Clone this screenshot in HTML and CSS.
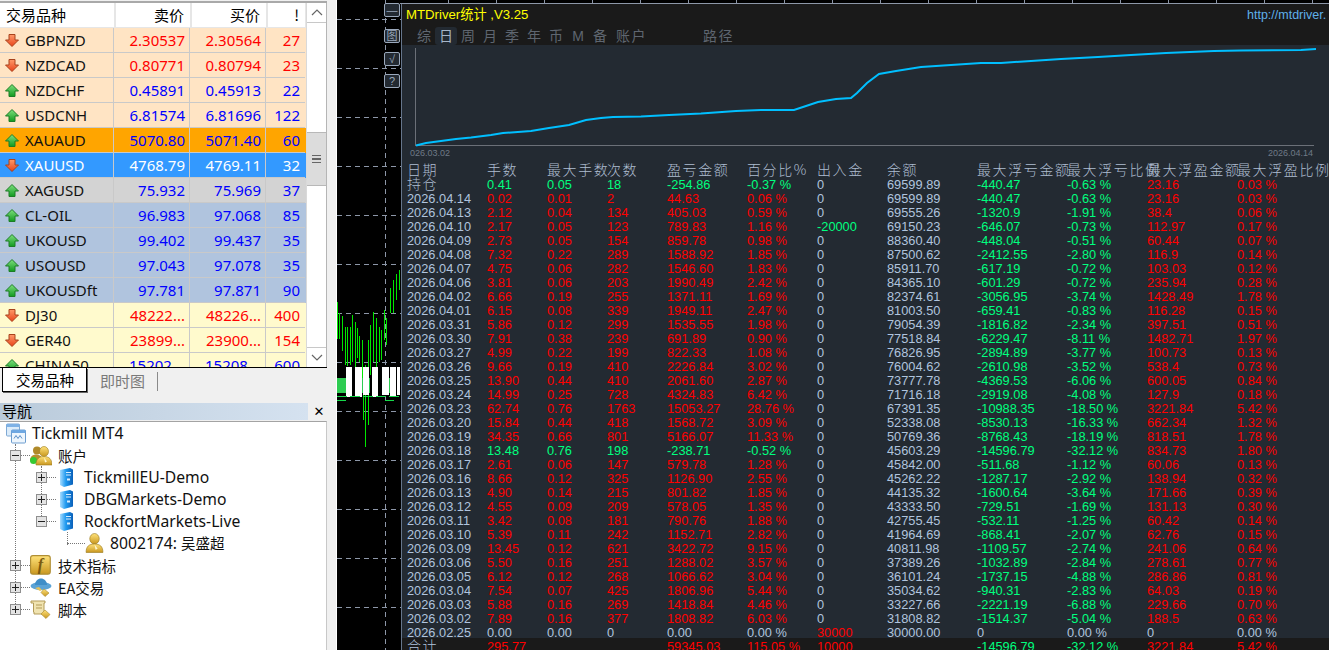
FILE: index.html
```html
<!DOCTYPE html>
<html lang="zh">
<head>
<meta charset="utf-8">
<title>MetaTrader 4</title>
<link rel="stylesheet" href="styles.css">
</head>
<body>
<svg class="defs" width="0" height="0">
  <defs>
    <linearGradient id="gu" x1="0" y1="0" x2="0" y2="1"><stop offset="0" stop-color="#7fe07f"/><stop offset="1" stop-color="#119a1f"/></linearGradient>
    <linearGradient id="gd" x1="0" y1="0" x2="0" y2="1"><stop offset="0" stop-color="#ff9a6a"/><stop offset="1" stop-color="#e8431a"/></linearGradient>
    <linearGradient id="gs" x1="0" y1="0" x2="1" y2="0"><stop offset="0" stop-color="#a8dcff"/><stop offset=".45" stop-color="#1f9af0"/><stop offset="1" stop-color="#0a5fb8"/></linearGradient>
    <linearGradient id="gg" x1="0" y1="0" x2="0" y2="1"><stop offset="0" stop-color="#ffe27a"/><stop offset="1" stop-color="#c9971f"/></linearGradient>
    <symbol id="up" viewBox="0 0 14 13"><path d="M7 .5 13.5 7H10v5.5H4V7H.5z" fill="url(#gu)" stroke="#1c7d26"/></symbol>
    <symbol id="down" viewBox="0 0 14 13"><path d="M7 12.5 .5 6H4V.5h6V6h3.500z" fill="url(#gd)" stroke="#a8421c"/></symbol>
    <symbol id="term" viewBox="0 0 20 20">
      <rect x=".5" y=".5" width="13" height="12" rx="1" fill="#dcecfa" stroke="#7fa9d4"/><rect x=".5" y=".5" width="13" height="3" fill="#7fb2e6"/>
      <rect x="5.500" y="6.500" width="14" height="13" rx="1" fill="#eef6fd" stroke="#6d9dcf"/><rect x="5.500" y="6.500" width="14" height="3" fill="#6fa8e2"/>
      <path d="M8 15l2-3 2 3 2-3 2 3" fill="none" stroke="#5a8fc8"/>
    </symbol>
    <symbol id="user" viewBox="0 0 18 19">
      <ellipse cx="9" cy="5.500" rx="4.500" ry="5" fill="url(#gg)" stroke="#9a7a20" stroke-width=".6"/>
      <path d="M1 18.500c0-6 3-8 8-8s8 2 8 8z" fill="url(#gg)" stroke="#9a7a20" stroke-width=".6"/>
      <path d="M9 11l3 4-2 1z" fill="#fff6cf"/>
    </symbol>
    <symbol id="users" viewBox="0 0 22 20">
      <circle cx="7" cy="5" r="4" fill="#b08a2a"/><path d="M0 15c0-4 3-6 6-6s4 1 5 2v6H2z" fill="#b78f2e"/>
      <circle cx="3.500" cy="15" r="3.500" fill="#35c932"/>
      <ellipse cx="14" cy="6" rx="4.500" ry="5" fill="url(#gg)" stroke="#9a7a20" stroke-width=".6"/>
      <path d="M6 19.500c0-6 3-8.500 8-8.500s8 2.500 8 8.500z" fill="url(#gg)" stroke="#9a7a20" stroke-width=".6"/>
      <path d="M14 12l3 4-2 1z" fill="#fff6cf"/>
    </symbol>
    <symbol id="server" viewBox="0 0 15 20">
      <path d="M1 2.500 11 .5l3 1.500v15l-9 2.500-4-2z" fill="url(#gs)"/>
      <path d="M7 5h5M7 7.500h5" stroke="#d7eeff" fill="none"/><rect x="8" y="11" width="3" height="2" fill="#d7eeff"/>
    </symbol>
    <symbol id="func" viewBox="0 0 19 18">
      <rect x=".5" y=".5" width="17" height="16" rx="2" fill="url(#gg)" stroke="#b08f35"/>
      <text x="9" y="13" text-anchor="middle" class="fglyph">f</text>
    </symbol>
    <symbol id="hat" viewBox="0 0 22 19">
      <ellipse cx="11" cy="8" rx="10.500" ry="4" fill="#5ba3d6"/><path d="M5 7c0-4 3-6.500 6-6.500s6 2.500 6 6.500z" fill="#3f8ec8"/>
      <path d="M5 10l5 3 2-1-3-3z" fill="#e5c25d"/><path d="M14 11l5 4-4 3.500-4-4z" fill="url(#gg)" stroke="#a8892f" stroke-width=".6"/>
    </symbol>
    <symbol id="scroll" viewBox="0 0 22 19">
      <path d="M1 1h14v2h-1v9h1v2H4v-2h-.5V3H1z" fill="#f0e3b0" stroke="#b39b58"/>
      <path d="M6 5h6M6 8h6" stroke="#b39b58"/>
      <path d="M15 10l5 4.500-4 4-5-4.500z" fill="url(#gg)" stroke="#a8892f" stroke-width=".6"/>
    </symbol>
  </defs>
</svg>

<div class="app">
  <aside class="side">
    <section class="market">
      <div class="mw-table">
        <div class="mw-head">
          <div class="hc hc-name">交易品种</div>
          <div class="hc hc-num">卖价</div>
          <div class="hc hc-num">买价</div>
          <div class="hc hc-num">!</div>
        </div>
        <div class="mw-row peach dn"><div class="c-name"><svg class="arr"><use href="#down"/></svg>GBPNZD</div><div class="c-n">2.30537</div><div class="c-n">2.30564</div><div class="c-n c-s">27</div></div>
        <div class="mw-row peach dn"><div class="c-name"><svg class="arr"><use href="#down"/></svg>NZDCAD</div><div class="c-n">0.80771</div><div class="c-n">0.80794</div><div class="c-n c-s">23</div></div>
        <div class="mw-row peach up"><div class="c-name"><svg class="arr"><use href="#up"/></svg>NZDCHF</div><div class="c-n">0.45891</div><div class="c-n">0.45913</div><div class="c-n c-s">22</div></div>
        <div class="mw-row peach up"><div class="c-name"><svg class="arr"><use href="#up"/></svg>USDCNH</div><div class="c-n">6.81574</div><div class="c-n">6.81696</div><div class="c-n c-s">122</div></div>
        <div class="mw-row orange up"><div class="c-name"><svg class="arr"><use href="#up"/></svg>XAUAUD</div><div class="c-n">5070.80</div><div class="c-n">5071.40</div><div class="c-n c-s">60</div></div>
        <div class="mw-row sel"><div class="c-name"><svg class="arr"><use href="#down"/></svg>XAUUSD</div><div class="c-n">4768.79</div><div class="c-n">4769.11</div><div class="c-n c-s">32</div></div>
        <div class="mw-row grey up"><div class="c-name"><svg class="arr"><use href="#up"/></svg>XAGUSD</div><div class="c-n">75.932</div><div class="c-n">75.969</div><div class="c-n c-s">37</div></div>
        <div class="mw-row steel up"><div class="c-name"><svg class="arr"><use href="#up"/></svg>CL-OIL</div><div class="c-n">96.983</div><div class="c-n">97.068</div><div class="c-n c-s">85</div></div>
        <div class="mw-row steel up"><div class="c-name"><svg class="arr"><use href="#up"/></svg>UKOUSD</div><div class="c-n">99.402</div><div class="c-n">99.437</div><div class="c-n c-s">35</div></div>
        <div class="mw-row steel up"><div class="c-name"><svg class="arr"><use href="#up"/></svg>USOUSD</div><div class="c-n">97.043</div><div class="c-n">97.078</div><div class="c-n c-s">35</div></div>
        <div class="mw-row steel up"><div class="c-name"><svg class="arr"><use href="#up"/></svg>UKOUSDft</div><div class="c-n">97.781</div><div class="c-n">97.871</div><div class="c-n c-s">90</div></div>
        <div class="mw-row lemon dn"><div class="c-name"><svg class="arr"><use href="#down"/></svg>DJ30</div><div class="c-n">48222...</div><div class="c-n">48226...</div><div class="c-n c-s">400</div></div>
        <div class="mw-row lemon dn"><div class="c-name"><svg class="arr"><use href="#down"/></svg>GER40</div><div class="c-n">23899...</div><div class="c-n">23900...</div><div class="c-n c-s">154</div></div>
        <div class="mw-row lemon up"><div class="c-name"><svg class="arr"><use href="#up"/></svg>CHINA50</div><div class="c-n c-l">15202</div><div class="c-n c-l">15208</div><div class="c-n c-s">600</div></div>
      </div>
      <div class="vscroll">
        <div class="sb-btn"><svg width="12" height="7" viewBox="0 0 12 7"><path d="M1 6l5-5 5 5" fill="none" stroke="#666" stroke-width="1.200"/></svg></div>
        <div class="sb-track"><div class="sb-thumb"><i></i><i></i><i></i></div></div>
        <div class="sb-btn sb-btn-b"><svg width="12" height="7" viewBox="0 0 12 7"><path d="M1 1l5 5 5-5" fill="none" stroke="#666" stroke-width="1.200"/></svg></div>
      </div>
    </section>

    <div class="tabs">
      <div class="tab on">交易品种</div>
      <div class="tab">即时图</div>
    </div>

    <section class="nav">
      <header class="nav-head"><span class="nav-title">导航</span><span class="nav-x">✕</span></header>
      <div class="tree">
        <span class="vl vl1"></span><span class="vl vl2"></span><span class="vl vl3"></span>
        <div class="node l0"><svg class="ti"><use href="#term"/></svg><span>Tickmill MT4</span></div>
        <div class="node l1"><span class="exp"></span><span class="dots"></span><svg class="ti"><use href="#users"/></svg><span class="cn">账户</span></div>
        <div class="node l2"><span class="exp plus"></span><span class="dots"></span><svg class="ti ti-s"><use href="#server"/></svg><span>TickmillEU-Demo</span></div>
        <div class="node l2"><span class="exp plus"></span><span class="dots"></span><svg class="ti ti-s"><use href="#server"/></svg><span>DBGMarkets-Demo</span></div>
        <div class="node l2"><span class="exp"></span><span class="dots"></span><svg class="ti ti-s"><use href="#server"/></svg><span>RockfortMarkets-Live</span></div>
        <div class="node l3"><span class="dots dots-l"></span><svg class="ti ti-u"><use href="#user"/></svg><span>8002174: <span class="cn">吴盛超</span></span></div>
        <div class="node l1"><span class="exp plus"></span><span class="dots"></span><svg class="ti"><use href="#func"/></svg><span class="cn">技术指标</span></div>
        <div class="node l1"><span class="exp plus"></span><span class="dots"></span><svg class="ti"><use href="#hat"/></svg><span class="cn">EA交易</span></div>
        <div class="node l1"><span class="exp plus"></span><span class="dots"></span><svg class="ti"><use href="#scroll"/></svg><span class="cn">脚本</span></div>
      </div>
    </section>
  </aside>

  <main class="chart">
    <svg class="chart-bg" width="992" height="650" viewBox="337 0 992 650" shape-rendering="crispEdges">
      <path d="M337 19.500H401M337 68.500H401M337 117.500H401M337 166.500H401M337 215.500H401M337 264.500H401M337 313.500H401M337 362.500H401M337 411.500H401M337 460.500H401M337 509.500H401M337 558.500H401M337 607.500H401M385.500 0V650" stroke="#8d97a8" stroke-dasharray="5 4" fill="none"/>
      <path d="M400 3.500H1329M448.500 0V3M496.500 0V3M544.500 0V3M592.500 0V3M640.500 0V3M688.500 0V3M736.500 0V3M784.500 0V3M832.500 0V3M880.500 0V3M928.500 0V3M976.500 0V3M1024.500 0V3M1072.500 0V3M1120.500 0V3M1168.500 0V3M1216.500 0V3M1264.500 0V3M1312.500 0V3" stroke="#8d97a8" fill="none"/>
      <path d="M337.500 302V339M339.500 313V339M342.500 316V351M345.500 327V365M347.500 327V366M350.500 327V365M352.500 315V362M355.500 322V375M357.500 328V358M359.500 336V362M362.500 340V380M365.500 365V447M363.500 390V420M368.500 340V425M370.500 325V375M373.500 312V362M376.500 318V375M379.500 327V362M381.500 330V360M384.500 310V340M386.500 318V345M390.500 288V313M393.500 280V313M396.500 274V300M399.500 270V290" stroke="#00e600" fill="none"/>
      <path d="M337 378H346V393H337ZM360 378H370V393H360ZM385 378H394V393H385Z" fill="#2ecc52"/>
      <path d="M346 367h6v30h-6zM355 367h7v30h-7zM363 367h6v28h-6zM372 367h6v30h-6zM382 367h7v28h-7zM390 367h6v30h-6zM397 367h3v28h-3z" fill="#fff"/>
      <path d="M337 396H400" stroke="#16d94a" stroke-dasharray="10 3" fill="none"/>
      <path d="M337 400H346M385 400H394" stroke="#16d94a" fill="none"/>
    </svg>

    <button class="cbtn cb1">—</button>
    <button class="cbtn cb2">图</button>
    <button class="cbtn cb3">√</button>
    <button class="cbtn cb4">?</button>

    <div class="stats">
      <div class="st-top">
        <div class="st-title">
          <span class="st-name">MTDriver统计 ,V3.25</span>
          <span class="st-url">http://mtdriver.</span>
        </div>
        <div class="st-tabs">
          <span>综</span><span class="active">日</span><span>周</span><span>月</span><span>季</span><span>年</span><span>币</span><span>M</span><span>备</span><span class="wide">账户</span><span class="wide far">路径</span>
        </div>
      </div>
      <div class="spark">
        <svg class="spark-svg" width="928" height="102" viewBox="401 45 928 102">
          <path d="M414.500 48V145.500H1313" fill="none" stroke="#6b7078" shape-rendering="crispEdges"/>
          <polyline points="415,145.500 425,143 440,141 455,139 470,137.500 490,135 502,133 530,131 548,128 568,125 585,120 600,118 612,117 640,116.500 668,115 700,113.500 735,111 760,110 793,110 805,106 817,102 835,99 850,98 856,93 866,83 878,74 895,71 920,67 950,65 980,63 1000,63 1030,61 1060,59 1097,57 1130,55 1165,53 1213,51 1240,50.500 1300,50 1315,49" fill="none" stroke="#00bfff" stroke-width="2"/>
        </svg>
        <div class="spark-axis"><span>026.03.02</span><span>2026.04.14</span></div>
      </div>
      <div class="grid">
        <div class="row head"><span>日期</span><span>手数</span><span>最大手数</span><span>次数</span><span>盈亏金额</span><span>百分比%</span><span>出入金</span><span>余额</span><span>最大浮亏金额</span><span>最大浮亏比例</span><span>最大浮盈金额</span><span>最大浮盈比例</span></div>
        <div class="row gr"><span class="cjk">持仓</span><span>0.41</span><span>0.05</span><span>18</span><span>-254.86</span><span>-0.37 %</span><span class="n">0</span><span class="n">69599.89</span><span class="g">-440.47</span><span class="g">-0.63 %</span><span class="r">23.16</span><span class="r">0.03 %</span></div>
        <div class="row rd"><span class="n">2026.04.14</span><span>0.02</span><span>0.01</span><span>2</span><span>44.63</span><span>0.06 %</span><span class="n">0</span><span class="n">69599.89</span><span class="g">-440.47</span><span class="g">-0.63 %</span><span>23.16</span><span>0.03 %</span></div>
        <div class="row rd"><span class="n">2026.04.13</span><span>2.12</span><span>0.04</span><span>134</span><span>405.03</span><span>0.59 %</span><span class="n">0</span><span class="n">69555.26</span><span class="g">-1320.9</span><span class="g">-1.91 %</span><span>38.4</span><span>0.06 %</span></div>
        <div class="row rd"><span class="n">2026.04.10</span><span>2.17</span><span>0.05</span><span>123</span><span>789.83</span><span>1.16 %</span><span class="g">-20000</span><span class="n">69150.23</span><span class="g">-646.07</span><span class="g">-0.73 %</span><span>112.97</span><span>0.17 %</span></div>
        <div class="row rd"><span class="n">2026.04.09</span><span>2.73</span><span>0.05</span><span>154</span><span>859.78</span><span>0.98 %</span><span class="n">0</span><span class="n">88360.40</span><span class="g">-448.04</span><span class="g">-0.51 %</span><span>60.44</span><span>0.07 %</span></div>
        <div class="row rd"><span class="n">2026.04.08</span><span>7.32</span><span>0.22</span><span>289</span><span>1588.92</span><span>1.85 %</span><span class="n">0</span><span class="n">87500.62</span><span class="g">-2412.55</span><span class="g">-2.80 %</span><span>116.9</span><span>0.14 %</span></div>
        <div class="row rd"><span class="n">2026.04.07</span><span>4.75</span><span>0.06</span><span>282</span><span>1546.60</span><span>1.83 %</span><span class="n">0</span><span class="n">85911.70</span><span class="g">-617.19</span><span class="g">-0.72 %</span><span>103.03</span><span>0.12 %</span></div>
        <div class="row rd"><span class="n">2026.04.06</span><span>3.81</span><span>0.06</span><span>203</span><span>1990.49</span><span>2.42 %</span><span class="n">0</span><span class="n">84365.10</span><span class="g">-601.29</span><span class="g">-0.72 %</span><span>235.94</span><span>0.28 %</span></div>
        <div class="row rd"><span class="n">2026.04.02</span><span>6.66</span><span>0.19</span><span>255</span><span>1371.11</span><span>1.69 %</span><span class="n">0</span><span class="n">82374.61</span><span class="g">-3056.95</span><span class="g">-3.74 %</span><span>1428.49</span><span>1.78 %</span></div>
        <div class="row rd"><span class="n">2026.04.01</span><span>6.15</span><span>0.08</span><span>339</span><span>1949.11</span><span>2.47 %</span><span class="n">0</span><span class="n">81003.50</span><span class="g">-659.41</span><span class="g">-0.83 %</span><span>116.28</span><span>0.15 %</span></div>
        <div class="row rd"><span class="n">2026.03.31</span><span>5.86</span><span>0.12</span><span>299</span><span>1535.55</span><span>1.98 %</span><span class="n">0</span><span class="n">79054.39</span><span class="g">-1816.82</span><span class="g">-2.34 %</span><span>397.51</span><span>0.51 %</span></div>
        <div class="row rd"><span class="n">2026.03.30</span><span>7.91</span><span>0.38</span><span>239</span><span>691.89</span><span>0.90 %</span><span class="n">0</span><span class="n">77518.84</span><span class="g">-6229.47</span><span class="g">-8.11 %</span><span>1482.71</span><span>1.97 %</span></div>
        <div class="row rd"><span class="n">2026.03.27</span><span>4.99</span><span>0.22</span><span>199</span><span>822.33</span><span>1.08 %</span><span class="n">0</span><span class="n">76826.95</span><span class="g">-2894.89</span><span class="g">-3.77 %</span><span>100.73</span><span>0.13 %</span></div>
        <div class="row rd"><span class="n">2026.03.26</span><span>9.66</span><span>0.19</span><span>410</span><span>2226.84</span><span>3.02 %</span><span class="n">0</span><span class="n">76004.62</span><span class="g">-2610.98</span><span class="g">-3.52 %</span><span>538.4</span><span>0.73 %</span></div>
        <div class="row rd"><span class="n">2026.03.25</span><span>13.90</span><span>0.44</span><span>410</span><span>2061.60</span><span>2.87 %</span><span class="n">0</span><span class="n">73777.78</span><span class="g">-4369.53</span><span class="g">-6.06 %</span><span>600.05</span><span>0.84 %</span></div>
        <div class="row rd"><span class="n">2026.03.24</span><span>14.99</span><span>0.25</span><span>728</span><span>4324.83</span><span>6.42 %</span><span class="n">0</span><span class="n">71716.18</span><span class="g">-2919.08</span><span class="g">-4.08 %</span><span>127.9</span><span>0.18 %</span></div>
        <div class="row rd"><span class="n">2026.03.23</span><span>62.74</span><span>0.76</span><span>1763</span><span>15053.27</span><span>28.76 %</span><span class="n">0</span><span class="n">67391.35</span><span class="g">-10988.35</span><span class="g">-18.50 %</span><span>3221.84</span><span>5.42 %</span></div>
        <div class="row rd"><span class="n">2026.03.20</span><span>15.84</span><span>0.44</span><span>418</span><span>1568.72</span><span>3.09 %</span><span class="n">0</span><span class="n">52338.08</span><span class="g">-8530.13</span><span class="g">-16.33 %</span><span>662.34</span><span>1.32 %</span></div>
        <div class="row rd"><span class="n">2026.03.19</span><span>34.35</span><span>0.66</span><span>801</span><span>5166.07</span><span>11.33 %</span><span class="n">0</span><span class="n">50769.36</span><span class="g">-8768.43</span><span class="g">-18.19 %</span><span>818.51</span><span>1.78 %</span></div>
        <div class="row gr"><span class="n">2026.03.18</span><span>13.48</span><span>0.76</span><span>198</span><span>-238.71</span><span>-0.52 %</span><span class="n">0</span><span class="n">45603.29</span><span>-14596.79</span><span>-32.12 %</span><span class="r">834.73</span><span class="r">1.80 %</span></div>
        <div class="row rd"><span class="n">2026.03.17</span><span>2.61</span><span>0.06</span><span>147</span><span>579.78</span><span>1.28 %</span><span class="n">0</span><span class="n">45842.00</span><span class="g">-511.68</span><span class="g">-1.12 %</span><span>60.06</span><span>0.13 %</span></div>
        <div class="row rd"><span class="n">2026.03.16</span><span>8.66</span><span>0.12</span><span>325</span><span>1126.90</span><span>2.55 %</span><span class="n">0</span><span class="n">45262.22</span><span class="g">-1287.17</span><span class="g">-2.92 %</span><span>138.94</span><span>0.32 %</span></div>
        <div class="row rd"><span class="n">2026.03.13</span><span>4.90</span><span>0.14</span><span>215</span><span>801.82</span><span>1.85 %</span><span class="n">0</span><span class="n">44135.32</span><span class="g">-1600.64</span><span class="g">-3.64 %</span><span>171.66</span><span>0.39 %</span></div>
        <div class="row rd"><span class="n">2026.03.12</span><span>4.55</span><span>0.09</span><span>209</span><span>578.05</span><span>1.35 %</span><span class="n">0</span><span class="n">43333.50</span><span class="g">-729.51</span><span class="g">-1.69 %</span><span>131.13</span><span>0.30 %</span></div>
        <div class="row rd"><span class="n">2026.03.11</span><span>3.42</span><span>0.08</span><span>181</span><span>790.76</span><span>1.88 %</span><span class="n">0</span><span class="n">42755.45</span><span class="g">-532.11</span><span class="g">-1.25 %</span><span>60.42</span><span>0.14 %</span></div>
        <div class="row rd"><span class="n">2026.03.10</span><span>5.39</span><span>0.11</span><span>242</span><span>1152.71</span><span>2.82 %</span><span class="n">0</span><span class="n">41964.69</span><span class="g">-868.41</span><span class="g">-2.07 %</span><span>62.76</span><span>0.15 %</span></div>
        <div class="row rd"><span class="n">2026.03.09</span><span>13.45</span><span>0.12</span><span>621</span><span>3422.72</span><span>9.15 %</span><span class="n">0</span><span class="n">40811.98</span><span class="g">-1109.57</span><span class="g">-2.74 %</span><span>241.06</span><span>0.64 %</span></div>
        <div class="row rd"><span class="n">2026.03.06</span><span>5.50</span><span>0.16</span><span>251</span><span>1288.02</span><span>3.57 %</span><span class="n">0</span><span class="n">37389.26</span><span class="g">-1032.89</span><span class="g">-2.84 %</span><span>278.61</span><span>0.77 %</span></div>
        <div class="row rd"><span class="n">2026.03.05</span><span>6.12</span><span>0.12</span><span>268</span><span>1066.62</span><span>3.04 %</span><span class="n">0</span><span class="n">36101.24</span><span class="g">-1737.15</span><span class="g">-4.88 %</span><span>286.86</span><span>0.81 %</span></div>
        <div class="row rd"><span class="n">2026.03.04</span><span>7.54</span><span>0.07</span><span>425</span><span>1806.96</span><span>5.44 %</span><span class="n">0</span><span class="n">35034.62</span><span class="g">-940.31</span><span class="g">-2.83 %</span><span>64.03</span><span>0.19 %</span></div>
        <div class="row rd"><span class="n">2026.03.03</span><span>5.88</span><span>0.16</span><span>269</span><span>1418.84</span><span>4.46 %</span><span class="n">0</span><span class="n">33227.66</span><span class="g">-2221.19</span><span class="g">-6.88 %</span><span>229.66</span><span>0.70 %</span></div>
        <div class="row rd"><span class="n">2026.03.02</span><span>7.89</span><span>0.16</span><span>377</span><span>1808.82</span><span>6.03 %</span><span class="n">0</span><span class="n">31808.82</span><span class="g">-1514.37</span><span class="g">-5.04 %</span><span>188.5</span><span>0.63 %</span></div>
        <div class="row nn"><span>2026.02.25</span><span>0.00</span><span>0.00</span><span>0</span><span>0.00</span><span>0.00 %</span><span class="r">30000</span><span>30000.00</span><span>0</span><span>0.00 %</span><span>0</span><span>0.00 %</span></div>
        <div class="row rd total"><span class="n cjk">合计</span><span>295.77</span><span></span><span></span><span>59345.03</span><span>115.05 %</span><span>10000</span><span></span><span class="g">-14596.79</span><span class="g">-32.12 %</span><span>3221.84</span><span>5.42 %</span></div>
      </div>
    </div>
  </main>
</div>
</body>
</html>
```

FILE: styles.css
```css
* { box-sizing: border-box; }
html, body { margin: 0; padding: 0; height: 650px; overflow: hidden; background: #000; }
.defs { position: absolute; }
.app { display: flex; width: 1329px; height: 650px; }

/* left column */
.side {
  width: 336px; flex: none; display: flex; flex-direction: column;
  background: #f0f0f0; font-family: "Noto Sans", "Noto Sans CJK SC", sans-serif;
  font-size: 15px; color: #000; overflow: hidden;
}
.market {
  display: flex; width: 327px; height: 367px; flex: none; margin-top: 1px;
  border-top: 2px solid #a9a9a9; border-bottom: 1px solid #000; background: #fff;
  overflow: hidden;
}
.mw-table { width: 306px; flex: none; overflow: hidden; }
.mw-head { display: grid; grid-template-columns: 114px 76px 76px 39px; height: 25px; background: #e6e6e6; }
.hc { background: #fff; height: 24px; line-height: 24px; margin-left: 2px; font-family: "Noto Sans CJK SC", sans-serif; font-size: 15px; }
.hc-name { margin-left: 0; padding-left: 6px; }
.hc-num { text-align: right; padding-right: 6px; }
.mw-row { display: grid; grid-template-columns: 114px 76px 76px 39px; height: 25px; line-height: 25px; }
.mw-row > div { border-right: 1px solid #c9c9c9; border-bottom: 1px solid #c9c9c9; white-space: nowrap; overflow: hidden; }
.mw-row > div:last-child { border-right: 0; }
.c-name { display: flex; align-items: center; padding-left: 5px; gap: 6px; color: #111; }
.c-n { text-align: right; padding-right: 4px; }
.c-s { padding-right: 5px; }
.c-l { text-align: left; padding-left: 15px; }
.arr { width: 14px; height: 13px; flex: none; }
.peach { background: #ffe4c4; }
.orange { background: #ffa500; }
.sel { background: #3399ff; color: #fff; }
.sel .c-name { color: #fff; }
.grey { background: #d3d3d3; }
.steel { background: #b0c4de; }
.lemon { background: #fffacd; }
.up .c-n { color: #0000ff; }
.dn .c-n { color: #ff0000; }

.vscroll { width: 21px; flex: none; display: flex; flex-direction: column; border-left: 1px solid #d9d9d9; border-right: 1px solid #b5b5b5; background: #fff; }
.sb-btn { height: 20px; flex: none; border-bottom: 1px solid #c8c8c8; display: flex; align-items: center; justify-content: center; }
.sb-btn-b { border-bottom: 0; border-top: 1px solid #c8c8c8; }
.sb-track { flex: 1; padding-top: 109px; }
.sb-thumb { height: 54px; background: #dcdcdc; border-top: 1px solid #b8b8b8; border-bottom: 1px solid #b8b8b8; display: flex; flex-direction: column; align-items: center; justify-content: center; gap: 2px; }
.sb-thumb i { display: block; width: 9px; height: 1.5px; background: #666; }

.tabs { height: 31px; flex: none; display: flex; align-items: flex-start; padding-left: 2px; font-family: "Noto Sans CJK SC", sans-serif; }
.tab { height: 24px; line-height: 24px; padding: 0 12px 0 12px; color: #7a7a7a; }
.tab.on { width: 85px; background: #fff; color: #000; padding: 0 0 0 13px; border: 1px solid #000; border-top: 0; box-shadow: 1px 1px 0 #666; line-height: 23px; font-size: 14.5px; }
.tab:not(.on) { border-right: 1px solid #8a8a8a; height: 19px; margin-top: 4px; line-height: 18px; padding: 0 12px 0 13px; font-size: 15px; }

.nav { flex: 1; display: flex; flex-direction: column; margin-top: 4px; }
.nav-head { height: 18px; flex: none; display: flex; width: 327px; }
.nav-title { width: 308px; flex: none; height: 17px; line-height: 16px; padding-left: 2px; background: linear-gradient(90deg, #b9cada, #d5e2f0); font-family: "Noto Sans CJK SC", sans-serif; font-size: 15px; }
.nav-x { flex: 1; text-align: center; padding-left: 3px; font-size: 13px; line-height: 17px; font-weight: bold; font-family: "DejaVu Sans", sans-serif; }
.tree { position: relative; flex: 1; width: 327px; background: #fff; border-top: 1px solid #a3a3a3; border-right: 1px solid #c8c8c8; font-size: 15.7px; }
.cn { font-size: 14.5px; font-family: "Noto Sans CJK SC", sans-serif; }
.node { height: 22px; display: flex; align-items: center; white-space: nowrap; color: #111; }
.l0 { padding-left: 6px; }
.l1 { padding-left: 10px; }
.l2 { padding-left: 36px; }
.l3 { padding-left: 67px; }
.exp { width: 11px; height: 11px; flex: none; position: relative; background: #e4e4e4; border: 1px solid #8f8f8f; z-index: 1; }
.exp::before { content: ""; position: absolute; left: 1px; right: 1px; top: 4px; height: 1px; background: #222; }
.exp.plus::after { content: ""; position: absolute; top: 1px; bottom: 1px; left: 4px; width: 1px; background: #222; }
.dots { width: 9px; flex: none; border-top: 1px dotted #777; }
.dots-l { width: 18px; }
.ti { width: 22px; height: 21px; flex: none; margin-right: 6px; }
.l0 .ti { width: 20px; }
.ti-s { width: 15px; height: 21px; margin-left: 3px; margin-right: 10px; }
.ti-u { width: 19px; height: 20px; margin-right: 6px; }
.fglyph { font-family: "Liberation Serif", serif; font-style: italic; font-weight: bold; font-size: 14px; fill: #7a5a10; }
.vl { position: absolute; border-left: 1px dotted #777; width: 0; }
.vl1 { left: 15px; top: 22px; height: 166px; }
.vl2 { left: 41px; top: 44px; height: 56px; }
.vl3 { left: 67px; top: 110px; height: 13px; }

/* chart */
.chart { position: relative; flex: 1; height: 650px; background: #000; border-left: 1px solid #fff; overflow: hidden; }
.chart-bg { position: absolute; left: 0; top: 0; }
.cbtn {
  position: absolute; left: 47px; width: 16px; height: 14px; padding: 0; background: #232a32;
  border: 1px solid #9aa8bb; border-radius: 2px; color: #9aa8bb; text-align: center;
  font: 11px/12px "Liberation Sans", "Noto Sans CJK SC", sans-serif;
}
.cb1 { top: 3px; }
.cb2 { top: 29px; }
.cb3 { top: 52px; }
.cb4 { top: 74px; }

.stats {
  position: absolute; left: 64px; top: 4px; width: 928px; height: 646px;
  background: #232a32; border-left: 1px solid #66768c; overflow: hidden;
  font: 12.8px/14px "Liberation Sans", "Noto Sans CJK SC", sans-serif;
}
.st-top { height: 41px; background: #1a1a1a; }
.st-title { display: flex; justify-content: space-between; height: 23px; padding: 4px 0 0 4px; }
.st-name { color: #ffff00; font-size: 13.2px; }
.st-url { color: #5fb0ea; width: 82px; overflow: hidden; white-space: nowrap; font-size: 12.5px; }
.st-tabs { display: flex; padding-left: 11px; height: 18px; color: #5f6670; font-size: 14px; line-height: 18px; white-space: nowrap; }
.st-tabs span { width: 22px; text-align: center; flex: none; }
.st-tabs .wide { width: 32px; margin-left: 5px; letter-spacing: 1.500px; text-align: left; }
.st-tabs .far { margin-left: 55px; }
.st-tabs .active { background: #232a32; color: #a6b6c9; border-radius: 3px; }

.spark { height: 119px; }
.spark-svg { display: block; }
.spark-axis { display: flex; justify-content: space-between; padding: 1px 16px 0 8px; color: #6f7a87; font-size: 9px; line-height: 11px; }
.grid { padding-left: 5px; color: #b0c4de; }
.row { display: grid; grid-template-columns: 80px 60px 60px 60px 80px 70px 70px 90px 90px 80px 90px 1fr; height: 14px; white-space: nowrap; }
.row > span { min-width: 0; overflow: visible; }
.head { font-family: "Noto Sans CJK SC", sans-serif; font-weight: 300; font-size: 14px; line-height: 10px; letter-spacing: 1.600px; color: #aebdd1; }
.cjk { font-family: "Noto Sans CJK SC", sans-serif; font-weight: 300; font-size: 14px; line-height: 10px; letter-spacing: 1.600px; color: #aebdd1; }
.rd { color: #ff0000; }
.gr { color: #00ff7f; }
.nn { color: #b0c4de; }
.n { color: #b0c4de; }
.g { color: #00ff7f; }
.r { color: #ff0000; }
.total { background: #1a1a1a; margin: -2px 0 0 -5px; padding: 2px 0 0 5px; height: 16px; }
```
